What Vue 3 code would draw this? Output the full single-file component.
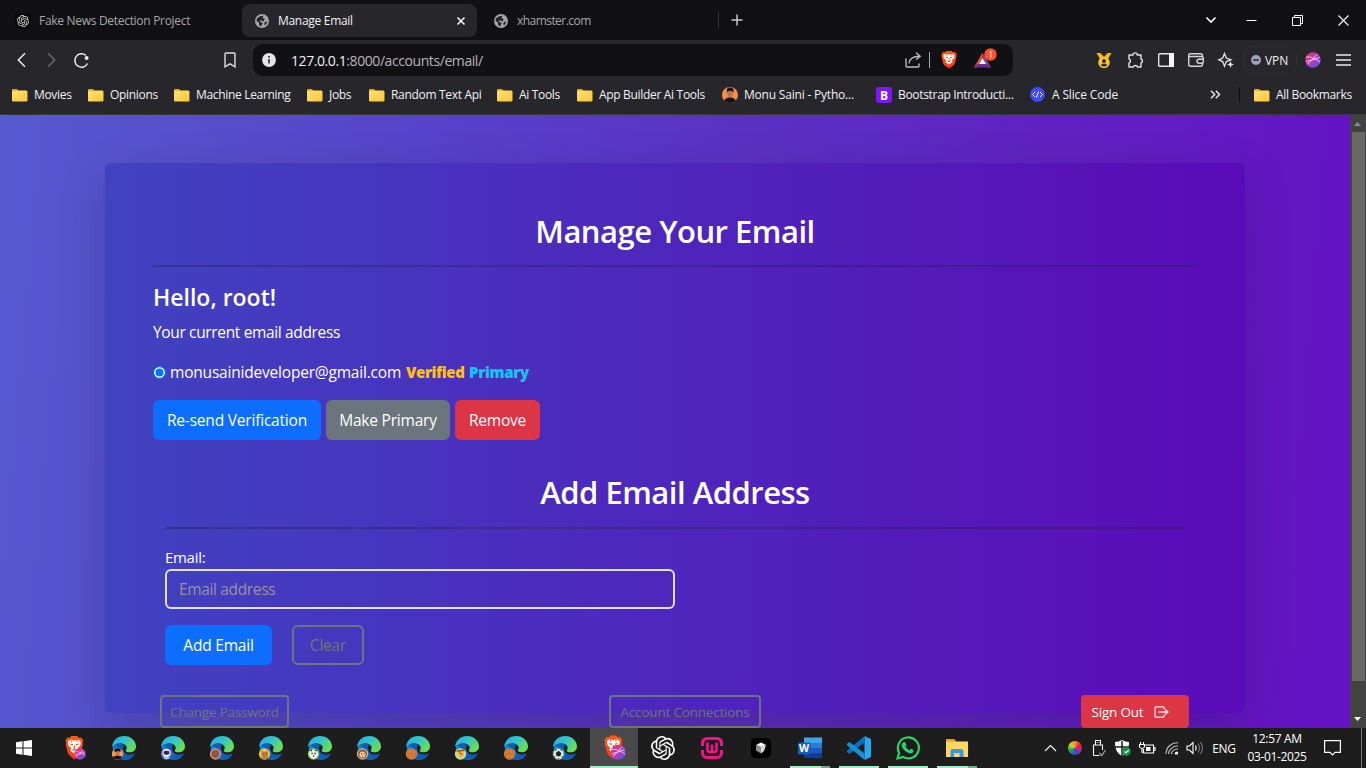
<script setup>
const bookmarks = [
  { kind: 'folder', label: 'Movies' },
  { kind: 'folder', label: 'Opinions' },
  { kind: 'folder', label: 'Machine Learning' },
  { kind: 'folder', label: 'Jobs' },
  { kind: 'folder', label: 'Random Text Api' },
  { kind: 'folder', label: 'Ai Tools' },
  { kind: 'folder', label: 'App Builder Ai Tools' },
  { kind: 'person', label: 'Monu Saini - Pytho...' },
  { kind: 'boot', label: 'Bootstrap Introducti...' },
  { kind: 'slice', label: 'A Slice Code' },
]
const edges = [
  { kind: 'man', bg: '#f39a4b' },
  { kind: 'astro', bg: '#7656b9' },
  { kind: 'owl', bg: '#d98b70' },
  { kind: 'cat', bg: '#efc246' },
  { kind: 'panda', bg: '#8ed44c' },
  { kind: 'lion', bg: '#e0b287' },
  { kind: 'ball', bg: '#e3873e' },
  { kind: 'pizza', bg: '#c8dc8c' },
  { kind: 'ball', bg: '#e3873e' },
  { kind: 'soccer', bg: '#eaf5ee' },
]
</script>

<template>
  <div class="screen">
    <svg class="defs" width="0" height="0">
      <defs>
        <linearGradient id="fold" x1="0" y1="0" x2="1" y2="1"><stop offset="0" stop-color="#ffe27a" /><stop offset="1" stop-color="#fcc52f" /></linearGradient>
        <linearGradient id="edgeTop" x1="0" y1="0" x2="1" y2=".6"><stop offset="0" stop-color="#2aa9dc" /><stop offset=".5" stop-color="#31c4cf" /><stop offset="1" stop-color="#6be04e" /></linearGradient>
        <linearGradient id="edgeLow" x1="0" y1="0" x2="1" y2="1"><stop offset="0" stop-color="#178ede" /><stop offset="1" stop-color="#0a4ba0" /></linearGradient>
        <linearGradient id="orb" x1="0" y1="0" x2="1" y2="1"><stop offset=".1" stop-color="#e1355f" /><stop offset=".5" stop-color="#bb3cc0" /><stop offset="1" stop-color="#4357dd" /></linearGradient>
        <linearGradient id="lionRed" x1="0" y1="0" x2="0" y2="1"><stop offset="0" stop-color="#ff5b1c" /><stop offset="1" stop-color="#fa3617" /></linearGradient>
        <g id="globe">
          <circle cx="7" cy="7" r="7" fill="#a4a6aa" />
          <path d="M2 4.6 5 2.2 8.6 1.7 7.4 4.1 9.8 5.1 8.4 7.4 6.1 6.3 4.4 7.5 7.7 9.1 6.1 12.4 4.2 10.9 3.9 8.6 1.5 6.9Z M10 8 12.6 7.4 10.2 11.5 9.2 10Z" fill="#242428" />
        </g>
        <g id="lion">
          <path d="M5.2 1.4 6.4 0h5.2l1.2 1.4 2-.2 2 2.4-.7 1.8.4 1.4-2 7.8-1.5 1.8L9 19.5l-4-3.1-1.5-1.8-2-7.8.4-1.4-.7-1.8 2-2.4Z" fill="url(#lionRed)" />
          <path d="m3.3 5 2-1.8 3.7.6 3.7-.6 2 1.8-.6 3-2.4 2.4.9 1.7L9 15l-3.600-2.900.900-1.700L3.900 8Z" fill="#fff" />
          <path d="m5.500 6.800 2.400.5M12.500 6.800l-2.400.5M7.400 11 9 12l1.600-1M9 8v3M7 3.800l-.6 1.200M11 3.800l.6 1.200" stroke="#fb4a1b" stroke-width="1" fill="none" />
        </g>
        <g id="orbmark">
          <circle cx="8" cy="8" r="7.700" fill="url(#orb)" />
          <path d="M1 5.200c4-1 9 1 14 5M2.400 12c3-2 5-4.500 9.500-9.500M1 9.500c5-1.500 9-2 13.500-4" stroke="#f5d4f3" stroke-width=".9" fill="none" />
        </g>
        <path id="knot" d="M22.2819 9.8211a5.9847 5.9847 0 0 0-.5157-4.9108 6.0462 6.0462 0 0 0-6.5098-2.9A6.0651 6.0651 0 0 0 4.9807 4.1818a5.9847 5.9847 0 0 0-3.9977 2.9 6.0462 6.0462 0 0 0 .7427 7.0966 5.98 5.98 0 0 0 .511 4.9107 6.051 6.051 0 0 0 6.5146 2.9001A5.9847 5.9847 0 0 0 13.2599 24a6.0557 6.0557 0 0 0 5.7718-4.2058 5.9894 5.9894 0 0 0 3.9977-2.9001 6.0557 6.0557 0 0 0-.7475-7.0729zm-9.022 12.6081a4.4755 4.4755 0 0 1-2.8764-1.0408l.1419-.0804 4.7783-2.7582a.7948.7948 0 0 0 .3927-.6813v-6.7369l2.02 1.1686a.071.071 0 0 1 .038.052v5.5826a4.504 4.504 0 0 1-4.4945 4.4944zm-9.6607-4.1254a4.4708 4.4708 0 0 1-.5346-3.0137l.142.0852 4.783 2.7582a.7712.7712 0 0 0 .7806 0l5.8428-3.3685v2.3324a.0804.0804 0 0 1-.0332.0615L9.74 19.9502a4.4992 4.4992 0 0 1-6.1408-1.6464zM2.3408 7.8956a4.485 4.485 0 0 1 2.3655-1.9728V11.6a.7664.7664 0 0 0 .3879.6765l5.8144 3.3543-2.0201 1.1685a.0757.0757 0 0 1-.071 0l-4.8303-2.7865A4.504 4.504 0 0 1 2.3408 7.872zm16.5963 3.8558L13.1038 8.364 15.1192 7.2a.0757.0757 0 0 1 .071 0l4.8303 2.7913a4.4944 4.4944 0 0 1-.6765 8.1042v-5.6772a.79.79 0 0 0-.407-.667zm2.0107-3.0231l-.142-.0852-4.7735-2.7818a.7759.7759 0 0 0-.7854 0L9.409 9.2297V6.8974a.0662.0662 0 0 1 .0284-.0615l4.8303-2.7866a4.4992 4.4992 0 0 1 6.6802 4.66zM8.3065 12.863l-2.02-1.1638a.0804.0804 0 0 1-.038-.0567V6.0742a4.4992 4.4992 0 0 1 7.3757-3.4537l-.142.0805L8.704 5.459a.7948.7948 0 0 0-.3927.6813zm1.0976-2.3654l2.602-1.4998 2.6069 1.4998v2.9994l-2.5974 1.4997-2.6067-1.4997Z" fill="#fff" />
        <g id="folder">
          <path d="M0 2.200Q0 1 1.200 1h3.600l1.800 1.600h7.200Q15 2.600 15 3.800V7H0Z" fill="#e5a91c" />
          <rect y="2.800" width="15.500" height="10.700" rx="1" fill="url(#fold)" />
        </g>
      </defs>
    </svg>

    <header class="tabs">
      <div class="tab t1">
        <svg class="fav" width="16" height="16" viewBox="-4 -4 32 32"><rect x="-4" y="-4" width="32" height="32" rx="6" fill="#080808" /><use href="#knot" opacity=".85" /></svg>
        <span>Fake News Detection Project</span>
      </div>
      <div class="tab t2">
        <svg width="14" height="14"><use href="#globe" /></svg>
        <span>Manage Email</span>
        <svg class="x" width="8" height="8"><path d="m.5.5 7 7m0-7-7 7" stroke="#fff" stroke-width="1.500" /></svg>
      </div>
      <div class="tab t3">
        <svg width="14" height="14"><use href="#globe" /></svg>
        <span class="site">xhamster.com</span>
      </div>
      <svg class="plus" width="12" height="12"><path d="M6 .5v11M.5 6h11" stroke="#c8c8ca" stroke-width="1.500" /></svg>
      <div class="win">
        <svg width="12" height="8"><path d="m1.500 1.500 4.500 4.500 4.500-4.500" fill="none" stroke="#fff" stroke-width="1.600" /></svg>
        <svg width="11" height="11"><path d="M.5 5.500h10" stroke="#fff" /></svg>
        <svg width="11" height="11"><path d="M.5 2.500h8v8h-8ZM2.500 2.500v-2h8v8h-2" fill="none" stroke="#fff" /></svg>
        <svg width="11" height="11"><path d="m.5.5 10 10m0-10-10 10" stroke="#fff" stroke-width="1.100" /></svg>
      </div>
    </header>

    <nav class="toolbar">
      <div class="navs">
        <svg width="9" height="16"><path d="M8 1.200 1.300 8 8 14.800" fill="none" stroke="#ececef" stroke-width="1.500" /></svg>
        <svg width="9" height="16"><path d="M1 1.200 7.700 8 1 14.800" fill="none" stroke="#6b6b70" stroke-width="1.500" /></svg>
        <svg width="17" height="17"><path d="M14.500 11.500A6.700 6.700 0 1 1 12.800 3.300" fill="none" stroke="#ececef" stroke-width="1.500" /><circle cx="13.600" cy="6" r="2" fill="#ececef" /></svg>
      </div>
      <svg class="bm" width="12" height="16"><path d="M1 1.800q0-.8.8-.8h8.400q.8 0 .8.800v13L6 11.800l-5 3Z" fill="none" stroke="#dedee2" stroke-width="1.400" /></svg>
      <div class="omni">
        <svg width="14" height="14"><circle cx="7" cy="7" r="6.900" fill="#e6e6ea" /><path d="M7 6v4.500M7 3v1.700" stroke="#333" stroke-width="1.700" /></svg>
        <span class="url">127.0.0.1<i>:8000/accounts/email/</i></span>
        <svg class="share" width="17" height="16"><path d="M1 6.500V14q0 1 1 1h11q1 0 1-1v-2.500M4 11.500q.5-7 10.500-7.300M11 .8l4.200 3.400-4 3.300" fill="none" stroke="#bbbbc0" stroke-width="1.400" /></svg>
        <span class="vline"></span>
        <svg class="shield" width="18" height="18" viewBox="0 0 18 20" preserveAspectRatio="none"><use href="#lion" /></svg>
        <svg class="bat" width="24" height="20"><path d="M9.500 3.500 1 18.500h3L9.500 9Z" fill="#f14a38" /><path d="M9.500 3.500 18 18.500h-3L9.500 9Z" fill="#a0398f" /><path d="m1 18.500 3.500-3.500h10l3.500 3.500Z" fill="#662d91" /><path d="M9.500 9 6 15h7Z" fill="#fff" /><circle cx="17.500" cy="5.500" r="6.200" fill="#ff5030" /><text x="15.200" y="8.500" class="one">1</text></svg>
      </div>
      <div class="ext">
        <svg class="medal" width="16" height="17"><path d="M.5 1h4l3.500 4 3.500-4h4L12 7H4Z" fill="#f6b51c" /><circle cx="8" cy="10.500" r="5.800" fill="#ffc52d" /><circle cx="8" cy="9" r="1.900" fill="#28282b" /><path d="M4.500 13q3.500-3 7 0-3.500 3-7 0" fill="#28282b" /></svg>
        <svg class="puz" width="17" height="17"><path d="M2 3h4a2.100 2.100 0 0 1 4.200 0H14v4a2.100 2.100 0 0 1 0 4v4h-3.500a2.200 2.200 0 0 0-4.200 0H2v-4a2.100 2.100 0 0 0 0-4Z" fill="none" stroke="#e4e4e8" stroke-width="1.400" stroke-linejoin="round" /></svg>
        <svg class="side" width="16" height="14"><rect x=".7" y=".7" width="14.600" height="12.600" rx="1" fill="none" stroke="#e4e4e8" stroke-width="1.400" /><path d="M11 0h5v14h-5Z" fill="#f4f4f6" /></svg>
        <svg class="wal" width="16" height="14"><path d="M14.500 3.500v-1q0-1.800-1.800-1.800H2.500Q.7.700.7 2.200v9q0 2 2 2h9.800q2 0 2-2v-.5M1 3.500h12q2.300 0 2.300 2v3.700q0 1-1 1H11q-2 0-2-2 0-2 2-2h4" fill="none" stroke="#d4d4d8" stroke-width="1.400" /></svg>
        <svg class="leo" width="17" height="17"><path d="M6.500 1.500 8.300 6l4.700 1.800-4.700 1.800-1.800 4.700-1.800-4.700L.8 7.800 4.700 6Z" fill="none" stroke="#e4e4e8" stroke-width="1.300" /><path d="m12.500 9 .9 2.600 2.600.9-2.600.9-.9 2.600-.9-2.600-2.600-.9 2.600-.9Z" fill="#e4e4e8" /></svg>
        <span class="vpn"><svg width="10" height="10"><circle cx="5" cy="5" r="5" fill="#a1a1b6" /><path d="M2.200 5h5.600" stroke="#25252a" stroke-width="1.500" /></svg>VPN</span>
        <svg class="orb" width="16" height="16"><use href="#orbmark" /></svg>
        <svg width="15" height="12"><path d="M0 1h15M0 6h15M0 11h15" stroke="#ececef" stroke-width="1.300" /></svg>
      </div>
    </nav>

    <div class="bookmarks">
      <div v-for="b in bookmarks" :key="b.label" class="bk" :class="'bk-' + b.kind">
        <svg v-if="b.kind === 'folder'" width="16" height="14"><use href="#folder" /></svg>
        <svg v-else-if="b.kind === 'person'" width="16" height="16"><circle cx="8" cy="8" r="8" fill="#f28f48" /><path d="M2 13.500q2-2.500 4-3l4 0q2 .5 4 3-2.500 2.500-6 2.500t-6-2.500" fill="#10131b" /><ellipse cx="8" cy="6.800" rx="2.700" ry="3.600" fill="#b9744c" /><path d="M4.800 6V2Q8-.8 11.500 2v4L10 4H6Z" fill="#17151b" /></svg>
        <svg v-else-if="b.kind === 'boot'" width="16" height="16"><rect width="16" height="16" rx="2.500" fill="#7c17f5" /><text x="4" y="12.600" class="bletter">B</text></svg>
        <svg v-else width="15" height="15"><circle cx="7.500" cy="7.500" r="7.400" fill="#404bff" /><path d="m5 5-2.500 2.500L5 10m5-5 2.500 2.500L10 10M8.500 4.500l-2 6" fill="none" stroke="#fff" /></svg>
        <span>{{ b.label }}</span>
      </div>
      <svg class="more" width="11" height="9"><path d="m1 .8 3.700 3.700L1 8.200M5.800.8l3.700 3.700-3.700 3.700" fill="none" stroke="#f0f0f2" stroke-width="1.400" /></svg>
      <span class="bsep"></span>
      <div class="bk all"><svg width="16" height="14"><use href="#folder" /></svg><span>All Bookmarks</span></div>
    </div>

    <section class="view">
      <main class="page">
        <article class="card">
          <h1>Manage Your Email</h1>
          <hr />
          <h2>Hello, root!</h2>
          <p class="cur">Your current email address</p>
          <div class="mail">
            <span class="radio"></span>
            <span class="addr">monusainideveloper@gmail.com</span>
            <b class="ver">Verified</b>
            <b class="pri">Primary</b>
          </div>
          <div class="acts">
            <button class="btn blue resend">Re-send Verification</button>
            <button class="btn gray">Make Primary</button>
            <button class="btn red remove">Remove</button>
          </div>
          <div class="form">
            <h1>Add Email Address</h1>
            <hr />
            <label>Email:</label>
            <div class="field">Email address</div>
            <div class="acts2">
              <button class="btn blue add">Add Email</button>
              <button class="btn line clear">Clear</button>
            </div>
          </div>
          <div class="foot">
            <button class="btn line sm pw">Change Password</button>
            <button class="btn line sm conn">Account Connections</button>
            <button class="btn red sm out">Sign Out
              <svg width="16" height="12"><path d="M10 3.200V1.800Q10 .8 9 .8H2Q1 .8 1 1.800v8.400q0 1 1 1h7q1 0 1-1V8.800M4.500 6h9M11 3.200 14 6l-3 2.800" fill="none" stroke="#fbe3e5" stroke-width="1.300" /></svg>
            </button>
          </div>
        </article>
      </main>
      <aside class="scroll">
        <svg width="7" height="4"><path d="M0 4 3.500 0 7 4Z" fill="#8d8d8d" /></svg>
        <div class="thumb"></div>
        <svg class="dn" width="7" height="4"><path d="M0 0h7L3.500 4Z" fill="#fff" /></svg>
      </aside>
    </section>

    <footer class="task">
      <div class="cell start"><svg width="16" height="16"><path d="M0 2.300 6.500 1.300v6.200H0ZM7.500 1.200 16 0v7.500H7.500ZM0 8.500h6.500v6.200L0 13.700ZM7.500 8.500H16V16l-8.500-1.200Z" fill="#fff" /></svg></div>
      <div class="cell"><svg width="24" height="24"><use href="#lion" transform="translate(1 0) scale(1.150 1.200)" /><use href="#orbmark" transform="translate(11 12) scale(.75)" /></svg></div>
      <div v-for="(e, i) in edges" :key="i" class="cell">
        <svg width="24" height="24">
          <path d="M1 10C-.5 19 6 24 12.500 24c4 0 8-2 10-5.500.5-1-.3-1.200-1-.8-3 1.500-8 1.300-9.600-2L10 10Q5 5 1 10" fill="url(#edgeLow)" />
          <path d="M1 10Q7 5 12.500 9c-3 2-4 9 1 11 3 1.500 7 .5 8.500-2-2 6-8 6-10 6C5 22 4 16 6 12Q4 9 1 10" fill="#0e5eb8" />
          <path d="M0 11C1 3.500 6 0 12 0c7 0 12 5 12 10.500 0 3.500-3 5.800-6.300 5.800-2.700 0-4.700-1-3.700-2.400 1-1.400 1-3.400-.5-4.700C9.500 6 3.500 6.700 0 11" fill="url(#edgeTop)" />
          <circle cx="5.500" cy="18" r="5.700" :fill="e.bg" />
          <g v-if="e.kind === 'man'"><ellipse cx="5.500" cy="16.500" rx="2.300" ry="3" fill="#c27e50" /><path d="M2.500 16v-2.500q3-2.500 6 0V16l-2-1ZM.5 21q5-3 10 0-5 5-10 0" fill="#17161b" /></g>
          <g v-else-if="e.kind === 'astro'"><circle cx="5.500" cy="17" r="4.200" fill="#e9f1fa" /><rect x="2.500" y="14.800" width="6" height="4" rx="2" fill="#263045" /><path d="M2 22q3.500-2 7 0-3.500 2.500-7 0" fill="#8cd8f5" /></g>
          <g v-else-if="e.kind === 'owl'"><circle cx="5.500" cy="18" r="4" fill="#77605a" /><path d="M4 17h3M4 19.500h3" stroke="#b64e36" stroke-width="1.300" /></g>
          <g v-else-if="e.kind === 'cat'"><path d="M2.500 23v-8.500l2 1.300h2.500l2-1.300V23Z" fill="#b98143" /><path d="M4 18h.8M6.700 18h.8" stroke="#503310" /></g>
          <g v-else-if="e.kind === 'panda'"><circle cx="5.500" cy="18.200" r="4.200" fill="#fff" /><path d="M2.500 14.500h1.500M7 14.500h1.500M3.300 17.500h1.500M6.300 17.500h1.500M5 20h1.200" stroke="#20291c" stroke-width="1.500" /></g>
          <g v-else-if="e.kind === 'lion'"><circle cx="5.500" cy="18" r="4.500" fill="#855539" /><circle cx="5.500" cy="18.500" r="3.100" fill="#f2c794" /><path d="M4 17.700h.8M6.500 17.700h.8M5 20h1" stroke="#634128" /></g>
          <g v-else-if="e.kind === 'ball'" fill="none" stroke="#b5662e" stroke-width=".7"><circle cx="5.500" cy="18" r="4.500" /><path d="M5.500 13v10M1 18h9M2.500 15q2 3 0 6M8.500 15q-2 3 0 6" /></g>
          <g v-else-if="e.kind === 'pizza'"><path d="m2 15.500 7.500-1-3.500 8Z" fill="#f0b138" /><path d="m1.800 15.200 7.700-1.200" stroke="#8f4c20" stroke-width="1.600" /><path d="M4.500 17.200h1.300M6.500 18.500h1" stroke="#d23d25" stroke-width="1.400" /></g>
          <g v-else><path d="m5.500 15.500 2.200 1.700-.8 2.500H4.100l-.8-2.500ZM2 14.500l1.500-1M9 14.500l-1.500-1M1 20l1 1.500M10 20l-1 1.500M4.500 23h2" fill="#1e2522" stroke="#1e2522" stroke-width="1.200" /><circle cx="5.500" cy="18" r="5.300" fill="none" stroke="#55a57b" stroke-width=".8" /></g>
        </svg>
      </div>
      <div class="cell active"><svg width="24" height="26"><use href="#lion" transform="translate(1 1.500) scale(1.150 1.200)" /><use href="#orbmark" transform="translate(8.500 10.500) scale(.97)" /></svg></div>
      <div class="cell"><svg width="24" height="24"><use href="#knot" /></svg></div>
      <div class="cell"><svg width="24" height="24"><path d="M2.500 10V7.500q0-5 5-5h9q5 0 5 5V10M2.500 14v2.500q0 5 5 5h9q5 0 5-5V14" fill="none" stroke="#f0148c" stroke-width="3" /><path d="M7.500 6.500v7.200q0 2.300 2.200 2.300 2.300 0 2.300-2.300V8.500v5.200q0 2.300 2.200 2.300 2.300 0 2.300-2.300V6.500" fill="none" stroke="#f0148c" stroke-width="2.600" /></svg></div>
      <div class="cell"><svg width="20" height="20"><rect width="20" height="20" rx="4.500" fill="#000" /><path d="m5 7 5-2.500L15 7l-5 2Z" fill="#fff" /><path d="M5 7v5.500l5 3V9Z" fill="#8f8f8f" /><path d="m15 7-5 2v6.500l3-2.500Z" fill="#d9d9d9" /></svg></div>
      <div class="cell run multi"><svg width="24" height="22"><path d="M6 .5h18v5.500H6Z" fill="#41a5ee" /><path d="M6 6h18v5H6Z" fill="#2b7cd3" /><path d="M6 11h18v5H6Z" fill="#185abd" /><path d="M6 16h18v5H6Z" fill="#103f91" /><rect y="5.500" width="12.500" height="12" rx="1" fill="#185abd" /><text x="1" y="15.200" class="word">W</text></svg></div>
      <div class="cell run"><svg width="24" height="24"><path d="m17.500 0 6.500 3v18l-6.500 3Z" fill="#27a7ef" /><path d="M17.500 6.500 2.500 18 0 16.300v-1.500L17.500 0Z" fill="#0870ba" /><path d="M17.500 17.500 2.500 6 0 7.700v1.500L17.500 24Z" fill="#168fd8" /></svg></div>
      <div class="cell run"><svg width="24" height="24"><path d="m1.500 22.500 1.600-5.700A10.500 10.500 0 1 1 7 20.900Z" fill="none" stroke="#2bd366" stroke-width="2.200" /><path d="M7.500 6.300q1.500-.8 2 .4l.9 2.200-1 1.700q1.500 2.700 4 3.700l1.500-1.600 2.700 1.400q0 3.300-3.500 3.400-3-.2-6-3.400-3.600-4-2-6.600Z" fill="#2bd366" /></svg></div>
      <div class="cell run multi"><svg width="22" height="20"><path d="M0 1h8l2 2v5H0Z" fill="#e5a213" /><path d="M0 3.500h22V19H0Z" fill="#ffd65e" /><path d="M4.500 19v-6q0-2 2-2h9q2 0 2 2v6h-4v-4H8v4Z" fill="#3d98e0" /></svg></div>
      <div class="tray">
        <svg width="13" height="8"><path d="m1 7 5.500-5.500L12 7" fill="none" stroke="#f5f5f5" stroke-width="1.200" /></svg>
        <span class="wheel"></span>
        <svg width="14" height="17"><path d="M3.500 5V.5h5V5M1.500 15.500V5h9v5M1.500 15.500h6M5 2.500h.8M6.800 2.500h.8" fill="none" stroke="#f2f2f2" stroke-width="1.100" /><path d="m7.500 13 2.300 2.500L13.500 10" fill="none" stroke="#aaa" stroke-width="1.200" /></svg>
        <svg width="17" height="17"><path d="M7 0q3 2 7 2 .5 10-7 14Q-.5 12 0 2q4 0 7-2" fill="#fff" /><path d="M7 1v15M0 7h14" stroke="#1d1d1d" stroke-width="1.500" /><circle cx="11.500" cy="11.500" r="4.400" fill="#148e43" /><path d="m9.500 11.500 1.500 1.500 2.700-3" stroke="#fff" fill="none" stroke-width="1.200" /></svg>
        <svg width="17" height="13"><path d="M5 3h9.500v8h-10V7M14.500 5.500H16v3h-1.500M1.500 0v2M4.500 0v2M.5 2.500h5V5Q3 8 .5 5ZM3 6v5" fill="none" stroke="#fff" stroke-width="1.100" /><path d="M7 5h4.500v4H7Z" fill="#fff" /></svg>
        <svg width="14" height="13"><path d="M1 12A11 11 0 0 1 13 .8M3.500 12A9 9 0 0 1 13 4M6.300 12A6.500 6.500 0 0 1 13 7" fill="none" stroke="#bbb" stroke-width="1.200" /><path d="M10 12q0-2 2.500-2v2Z" fill="#fff" stroke="#fff" /></svg>
        <svg width="18" height="14"><path d="M1 5h2.500L7 1.500v11L3.500 9H1Z" fill="none" stroke="#fff" stroke-width="1.100" /><path d="M9.500 4.500q1.500 2.500 0 5" fill="none" stroke="#fff" stroke-width="1.200" /><path d="M12 2.500q3 4.500 0 9M14.500 1q4 6 0 12" fill="none" stroke="#777" stroke-width="1.100" /></svg>
        <span class="eng">ENG</span>
        <div class="clock"><span>12:57 AM</span><span>03-01-2025</span></div>
        <svg class="note" width="17" height="16"><path d="M.6.6h15.800v11.800H11L8.500 15 6 12.400H.6Z" fill="none" stroke="#fff" stroke-width="1.200" /></svg>
        <span class="desk"></span>
      </div>
    </footer>
  </div>
</template>

<style>
html, body { overflow: hidden; background: #111113; }
</style>

<style scoped>
* { box-sizing: border-box; }
.screen { width: 1366px; height: 768px; display: grid; grid-template-rows: 40px 40px 35px 613px 40px; overflow: hidden; font-family: "Open Sans", "Noto Sans", sans-serif; position: relative; }
.defs { position: absolute; }
svg { display: block; flex: none; overflow: visible; }
span, b, button, h1, h2, label, p { white-space: nowrap; }
.tabs { background: #111113; display: flex; align-items: center; font-size: 12px; letter-spacing: -.3px; color: #a6a6a9; }
.tab { display: flex; align-items: center; height: 33px; padding-top: 1px; }
.t1 { width: 242px; padding-left: 15px; gap: 8px; }
.t2 { width: 235px; background: #26262b; border-radius: 8px; padding: 1px 12px 0 13px; gap: 9px; color: #f2f2f4; }
.t2 .x { margin-left: auto; }
.t3 { width: 242px; height: 16px; border-right: 1px solid #37373b; padding-left: 17px; gap: 9px; }
.site { letter-spacing: -.55px; }
.plus { margin-left: 12px; }
.win { margin-left: auto; margin-right: 18px; width: 143px; display: flex; align-items: center; }
.win svg:nth-child(2) { margin-left: 29px; }
.win svg:nth-child(3) { margin-left: 35px; }
.win svg:nth-child(4) { margin-left: 35px; }
.toolbar { background: #26262b; display: flex; align-items: center; }
.navs { display: flex; align-items: center; gap: 21px; width: 224px; padding-left: 17px; }
.navs svg:last-child { margin-left: -4px; }
.bm { width: 12px; }
.omni { width: 760px; height: 32px; margin-left: 17px; background: #111113; border-radius: 9px; display: flex; align-items: center; padding-left: 9px; }
.url { margin-left: 15px; width: 622px; font-size: 14px; letter-spacing: -.42px; color: #f0f0f2; }
.url i { font-style: normal; color: #b5b5b9; }
.share { margin-left: -8px; }
.vline { width: 1px; height: 16px; background: #aaaaae; margin-left: 7px; }
.shield { margin-left: 10px; }
.bat { margin-left: 15px; margin-top: -3px; }
.one { font: 9px "Open Sans"; fill: #fff; }
.ext { margin-left: auto; display: flex; align-items: center; padding-right: 15px; }
.puz { margin-left: 15px; margin-right: -1px; }
.side { margin-left: 15px; }
.wal { margin-left: 14px; }
.leo { margin-left: 14px; }
.vpn { width: 54px; height: 28px; margin-left: 8px; border: 1px solid #303036; border-radius: 9px; display: flex; align-items: center; gap: 4px; padding-left: 7px; font-size: 12px; letter-spacing: -.1px; color: #f0f0f2; }
.orb { margin: 0 15px 0 8px; }
.bookmarks { background: #26262b; border-bottom: 1px solid #38383d; padding: 0 0 5px 12px; display: grid; grid-template-columns: 76px 86px 133px 62px 128px 80px 145px 154px 154px 180px 29px 15px 112px; align-items: center; font-size: 12px; letter-spacing: -.32px; color: #f1f1f3; }
.bk { display: flex; align-items: center; gap: 6px; }
.bk-person { letter-spacing: -.2px; }
.bk-slice { gap: 7px; letter-spacing: -.15px; }
.bletter { font: bold 12px "Open Sans"; fill: #fff; }
.bsep { width: 1px; height: 15px; background: #0d0d0f; }
.view { display: flex; overflow: hidden; }
.page { width: 1350px; height: 613px; padding: 48px 105px 0; background: linear-gradient(95deg, #555ad1 0%, #5750cd 12%, #573dc7 38%, #5b30c1 55%, #6219c3 88%, #6611c5 100%); overflow: hidden; }
.card { height: 550px; border-radius: 6px; padding: 48px 48px 0; background: linear-gradient(90deg, #4043c0 0%, #4c2abd 43%, #5811b8 88%, #590bb8 100%); box-shadow: 0 16px 48px rgba(0, 0, 0, .175); color: #fff; display: flex; flex-direction: column; }
h1 { margin: 0; font-size: 31px; line-height: 38px; font-weight: 600; text-align: center; letter-spacing: -.5px; height: 38px; position: relative; top: 1px; }
hr { margin: 16px 0; border: 0; height: 2px; width: 100%; background: #212529; opacity: .33; flex: none; }
h2 { margin: 0 0 8px; font-size: 23px; line-height: 29px; font-weight: 600; letter-spacing: 0; height: 29px; }
.cur { margin: 0 0 16px; font-size: 15.500px; line-height: 24px; letter-spacing: -.35px; }
.mail { display: flex; align-items: center; height: 24px; font-size: 16px; line-height: 24px; }
.radio { width: 13px; height: 13px; border-radius: 50%; border: 1px solid #0a75ff; background: #0075ff; box-shadow: inset 0 0 0 1.500px #fff; margin-right: 4px; }
.addr { width: 236px; font-size: 15.500px; letter-spacing: -.2px; }
.ver { color: #ffc107; width: 63px; font-size: 15px; font-weight: 800; letter-spacing: -.4px; }
.pri { color: #0dcaf0; font-size: 15px; font-weight: 800; letter-spacing: -.3px; }
.acts { display: flex; gap: 5px; margin: 16px 0 33px; }
.btn { height: 40px; border: 2px solid transparent; border-radius: 6px; color: #fff; font: 15.500px "Open Sans", sans-serif; letter-spacing: -.2px; padding: 0; display: flex; align-items: center; justify-content: center; flex: none; }
.blue { background: #0d6efd; }
.gray { background: #6c757d; width: 124px; }
.red { background: #dc3545; }
.line { background: transparent; border-color: #6c757d; color: #6c757d; }
.resend { width: 168px; }
.remove { width: 85px; }
.form { padding: 0 12px; }
.form h1 { top: 0; }
.form hr { margin: 16px 0; }
label { display: block; font-size: 15px; line-height: 24px; letter-spacing: -.3px; }
.field { width: 510px; height: 40px; border: 2px solid #dee2e6; border-radius: 6px; font-size: 15.500px; line-height: 36px; padding-left: 12px; letter-spacing: -.35px; color: #9791a2; }
.acts2 { display: flex; gap: 20px; margin-top: 16px; }
.add { width: 107px; }
.clear { width: 72px; }
.foot { display: flex; margin: 30px 8px 0 7px; }
.btn.sm { height: 33px; font-size: 13.500px; border-radius: 4px; letter-spacing: -.2px; }
.pw { width: 129px; }
.conn { width: 152px; margin-left: 320px; }
.out { width: 108px; gap: 11px; padding-right: 8px; margin-left: 320px; }
.scroll { width: 16px; background: #424242; display: flex; flex-direction: column; align-items: center; padding: 7px 1px 0 0; }
.thumb { width: 13px; height: 549px; background: #686868; margin: 6px 0 0 1px; flex: none; }
.dn { margin-top: 36px; }
.task { background: #1d1d1d; display: flex; }
.cell { width: 49px; height: 40px; display: flex; align-items: center; justify-content: center; flex: none; position: relative; padding-right: 2px; }
.start { width: 48px; margin-right: 3px; padding: 0; }
.active { background: #4a4a4a; border-bottom: 2px solid #a0edc6; width: 48px; margin-right: 1px; padding: 0; }
.run::after { content: ""; position: absolute; bottom: 0; left: 4px; width: 40px; height: 2px; background: #a0edc6; }
.multi::after { background: linear-gradient(90deg, #a0edc6 31px, #76a68e 31px); }
.word { font: bold 10.500px "Open Sans"; fill: #fff; }
.tray { margin-left: auto; margin-right: 4px; width: 322px; display: grid; grid-template-columns: 13px 36px 12px 36px 12px 37px 9px 50px 56px 55px 2px; justify-content: end; align-items: center; justify-items: center; color: #fff; font-size: 12px; letter-spacing: -.35px; }
.wheel { width: 14px; height: 14px; border-radius: 50%; background: conic-gradient(#f59420, #e91c3c, #ae259c, #314ade, #12a852, #b7d629, #f59420); }
.clock { display: flex; flex-direction: column; align-items: center; line-height: 18px; }
.desk { width: 1px; height: 40px; background: #777; }
</style>
